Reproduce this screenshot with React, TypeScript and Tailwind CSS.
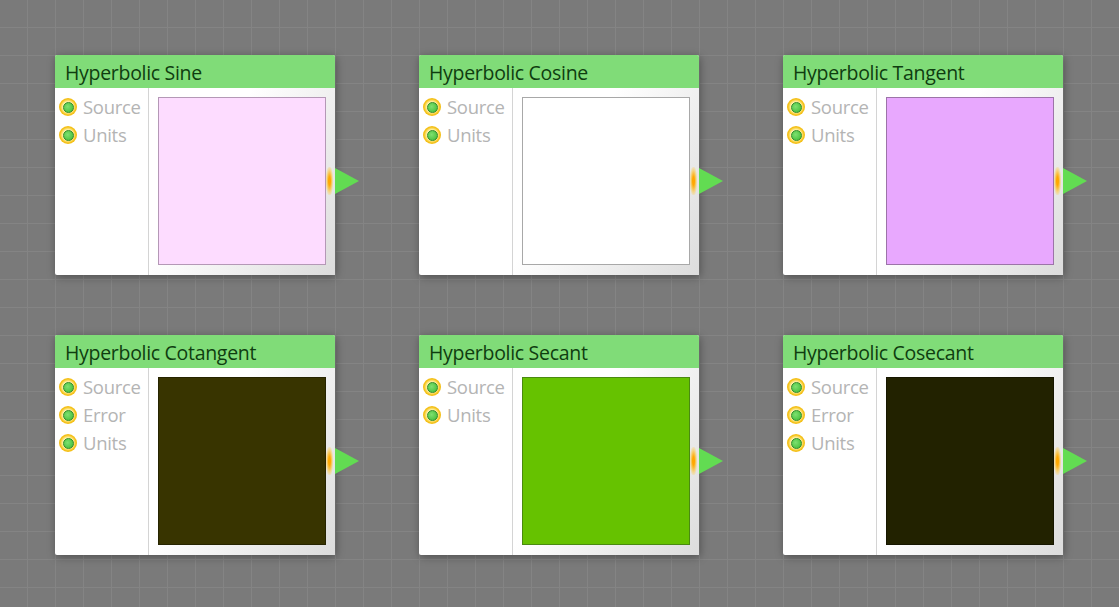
import React from "react";

type Node = { title: string; inputs: string[]; fill: string; border: string };

const nodes: Node[] = [
  { title: "Hyperbolic Sine", inputs: ["Source", "Units"], fill: "#fddcff", border: "#b498b6" },
  { title: "Hyperbolic Cosine", inputs: ["Source", "Units"], fill: "#ffffff", border: "#a8a8a8" },
  { title: "Hyperbolic Tangent", inputs: ["Source", "Units"], fill: "#e8a8fe", border: "#9c74a8" },
  { title: "Hyperbolic Cotangent", inputs: ["Source", "Error", "Units"], fill: "#383400", border: "#262400" },
  { title: "Hyperbolic Secant", inputs: ["Source", "Units"], fill: "#66c200", border: "#4a8a10" },
  { title: "Hyperbolic Cosecant", inputs: ["Source", "Error", "Units"], fill: "#222200", border: "#161600" },
];

function Dot() {
  return (
    <span className="flex h-[18px] w-[18px] shrink-0 items-center justify-center rounded-full bg-[radial-gradient(circle,#fff5b0_40%,#f5c21a_62%,#e8a800_100%)]">
      <span className="h-[11px] w-[11px] rounded-full border border-[#2f8a2a] bg-[radial-gradient(circle_at_40%_40%,#7ee070,#3cba34)]" />
    </span>
  );
}

function Card({ n }: { n: Node }) {
  return (
    <div className="relative flex h-[220px] w-[280px] flex-col rounded-[2px] bg-white shadow-[1px_2px_9px_rgba(0,0,0,0.35)]">
      <div className="flex h-[33px] items-center rounded-t-[2px] bg-[#80dc78] pl-[10px] pt-[3px] text-[19.5px] text-[#0f3d10] [font-family:'Open_Sans',sans-serif] tracking-[-0.3px]">
        {n.title}
      </div>
      <div className="flex flex-1">
        <div className="flex w-[94px] flex-col gap-[6px] border-r border-[#d4d4d4] pl-[4px] pt-[8px]">
          {n.inputs.map((i) => (
            <div key={i} className="flex h-[22px] items-center gap-[6px] text-[18.5px] text-[#b4b4b4] [font-family:'Open_Sans',sans-serif] tracking-[-0.3px]">
              <Dot />
              <span>{i}</span>
            </div>
          ))}
        </div>
        <div className="flex flex-1 bg-[linear-gradient(120deg,#ffffff_35%,#dcdcdc_100%)] pl-[9px] pt-[9px]">
          <div className="h-[168px] w-[168px] border" style={{ background: n.fill, borderColor: n.border }} />
        </div>
      </div>
      <div className="absolute left-[271px] top-[112px] h-[28px] w-[7px] rounded-full bg-[radial-gradient(ellipse,#ffa800_20%,rgba(255,200,60,0.55)_55%,transparent_80%)]" />
      <svg className="absolute left-[280px] top-[113px]" width="24" height="26" viewBox="0 0 24 26">
        <polygon points="0,0 24,13 0,26" fill="#62dc52" />
      </svg>
    </div>
  );
}

export default function App() {
  return (
    <div className="h-[607px] w-[1119px] overflow-hidden bg-[#7a7a7a] bg-[linear-gradient(to_right,#848484_1px,transparent_1px),linear-gradient(to_bottom,#848484_1px,transparent_1px)] bg-[size:28px_28px] bg-[position:27px_27px] pl-[55px] pt-[55px]">
      <div className="grid grid-cols-[280px_280px_280px] gap-x-[84px] gap-y-[60px]">
        {nodes.map((n) => (
          <Card key={n.title} n={n} />
        ))}
      </div>
    </div>
  );
}
